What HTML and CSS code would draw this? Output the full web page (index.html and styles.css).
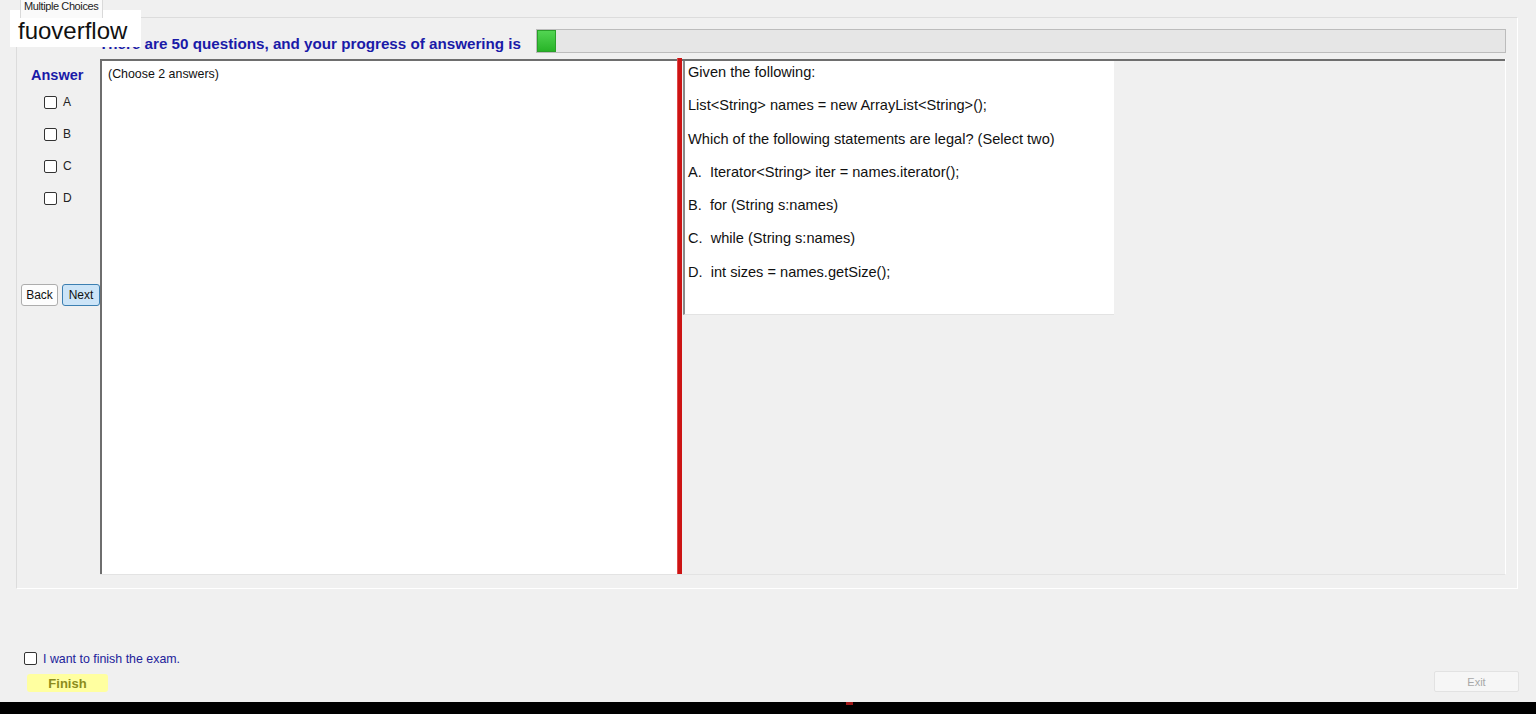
FILE: index.html
```html
<!DOCTYPE html>
<html lang="en">

<head>
  <meta charset="UTF-8" />
  <meta name="viewport" content="width=device-width, initial-scale=1.0" />
  <title>Multiple Choices</title>
  <link rel="stylesheet" href="styles.css">
</head>

<body>
  <div class="app">
    <!-- tab header -->
    <div class="tabs">
      <div class="tab">Multiple Choices</div>
    </div>

    <div class="tabpage">
      <!-- question count + progress -->
      <div class="head">
        <h1>There are 50 questions, and your progress of answering is</h1>
        <div class="progress">
          <div class="progress-fill"></div>
        </div>
      </div>

      <div class="main">
        <!-- answer options -->
        <div class="side">
          <div class="answer-title">Answer</div>
          <label class="opt"><input type="checkbox" /><span>A</span></label>
          <label class="opt"><input type="checkbox" /><span>B</span></label>
          <label class="opt"><input type="checkbox" /><span>C</span></label>
          <label class="opt"><input type="checkbox" /><span>D</span></label>
          <div class="nav">
            <button class="btn">Back</button>
            <button class="btn btn-next">Next</button>
          </div>
        </div>

        <div class="content">
          <div class="answerbox">(Choose 2 answers)</div>
          <div class="splitter"></div>
          <div class="question-area">
            <div class="question">
              <p>Given the following:</p>
              <p>List&lt;String&gt; names = new ArrayList&lt;String&gt;();</p>
              <p>Which of the following statements are legal? (Select two)</p>
              <p>A.&nbsp; Iterator&lt;String&gt; iter = names.iterator();</p>
              <p>B.&nbsp; for (String s:names)</p>
              <p>C.&nbsp; while (String s:names)</p>
              <p>D.&nbsp; int sizes = names.getSize();</p>
            </div>
          </div>
        </div>
      </div>
    </div>

    <!-- finish the exam -->
    <div class="footer">
      <div class="finish">
        <label class="finish-check"><input type="checkbox" /><span>I want to finish the exam.</span></label>
        <button class="btn-finish">Finish</button>
      </div>
      <button class="btn-exit" disabled>Exit</button>
    </div>

    <div class="taskbar"><span class="mark"></span></div>
  </div>

  <div class="watermark">fuoverflow</div>
</body>

</html>
```

FILE: styles.css
```css
* {
  margin: 0;
  padding: 0;
  box-sizing: border-box;
}

body {
  background: #f0f0f0;
  font-family: "Liberation Sans", Arial, sans-serif;
  color: #000;
  width: 1536px;
  height: 714px;
  overflow: hidden;
}

.app {
  height: 714px;
  display: flex;
  flex-direction: column;
}

/* tab strip */
.tabs {
  height: 17px;
  padding-left: 20px;
  display: flex;
}

.tab {
  width: 83px;
  height: 18px;
  background: #fafafa;
  border: 1px solid #d9d9d9;
  border-top: none;
  border-bottom: none;
  font-size: 11px;
  line-height: 12px;
  letter-spacing: -0.4px;
  padding-left: 3px;
  color: #222;
  white-space: nowrap;
  overflow: hidden;
  position: relative;
  z-index: 1;
}

.tabpage {
  margin-left: 16px;
  width: 1502px;
  height: 572px;
  border: 1px solid #dcdcdc;
  border-right-color: #fff;
  border-bottom-color: #fff;
  padding-top: 11px;
}

.head {
  display: flex;
  align-items: flex-end;
  padding-left: 82px;
  gap: 15px;
  height: 24px;
}

.head h1 {
  font-size: 15.2px;
  line-height: 17px;
  margin-bottom: 1px;
  font-weight: bold;
  color: #1a1aa8;
  white-space: nowrap;
}

.progress {
  width: 970px;
  height: 24px;
  border: 1px solid #bcbcbc;
  background: #e6e6e6;
}

.progress-fill {
  width: 19px;
  height: 100%;
  background: linear-gradient(#52d452, #28b428);
  border: 1px solid #2aa02a;
}

.main {
  display: flex;
  margin-top: 6px;
  height: 516px;
}

/* left column */
.side {
  width: 83px;
  display: flex;
  flex-direction: column;
}

.answer-title {
  margin-top: 8px;
  padding-left: 14px;
  font-size: 14.5px;
  line-height: 17px;
  font-weight: bold;
  color: #1a1aa8;
  margin-bottom: 2px;
}

.opt {
  height: 32px;
  display: flex;
  align-items: center;
  gap: 6px;
  padding-left: 27px;
  font-size: 12px;
  color: #222;
}

input[type="checkbox"] {
  appearance: none;
  width: 13px;
  height: 13px;
  margin: 0;
  border: 1px solid #333;
  border-radius: 2px;
  background: #fff;
}

.nav {
  margin-top: 70px;
  padding-left: 4px;
  display: flex;
  gap: 4px;
}

.btn {
  width: 37px;
  height: 22px;
  font: 12px "Liberation Sans", Arial, sans-serif;
  background: #fdfdfd;
  border: 1px solid #adadad;
  border-radius: 3px;
  color: #111;
}

.btn-next {
  width: 38px;
  background: #cce4f7;
  border: 1px solid #3c7fb1;
}

/* answer / question panes */
.content {
  width: 1406px;
  display: flex;
  border-right: 1px solid #fff;
  border-bottom: 1px solid #e3e3e3;
}

.answerbox {
  width: 577px;
  background: #fff;
  border-top: 2px solid #6e6e6e;
  border-left: 2px solid #6e6e6e;
  padding: 6px 6px;
  font-size: 12.4px;
  line-height: 14px;
  color: #111;
}

.splitter {
  width: 5px;
  margin-top: -1px;
  background: #cc1414;
  border-left: 1px solid #e04848;
}

.question-area {
  flex: 1;
  border-top: 2px solid #6e6e6e;
  padding-left: 1px;
}

.question {
  width: 431px;
  height: 254px;
  background: #fff;
  border-left: 2px solid #8a8a8a;
  border-bottom: 1px solid #e3e3e3;
  padding: 3px 0 0 3px;
  font-size: 14.6px;
  color: #111;
}

.question p {
  line-height: 17px;
  margin-bottom: 16.3px;
  white-space: nowrap;
}

/* bottom bar */
.footer {
  flex: 1;
  display: flex;
  align-items: flex-end;
  justify-content: space-between;
  padding: 0 17px 10px 24px;
}

.finish {
  display: flex;
  flex-direction: column;
}

.finish-check {
  display: flex;
  align-items: center;
  gap: 6px;
  font-size: 12.4px;
  color: #22229a;
  height: 13px;
}

.btn-finish {
  margin-top: 9px;
  margin-left: 3px;
  width: 81px;
  height: 18px;
  background: #ffffa0;
  border: none;
  border-radius: 3px;
  font: bold 13px "Liberation Sans", Arial, sans-serif;
  color: #8c8c1c;
}

.btn-exit {
  width: 85px;
  height: 21px;
  background: #f6f6f6;
  border: 1px solid #e2e2e2;
  border-radius: 2px;
  font: 11px "Liberation Sans", Arial, sans-serif;
  color: #a8a8a8;
}

.taskbar {
  height: 12px;
  background: #000;
}

.mark {
  display: block;
  width: 7px;
  height: 3px;
  margin-left: 846px;
  background: #a01818;
}

/* floating label over the header */
.watermark {
  position: absolute;
  left: 10px;
  top: 10px;
  width: 131px;
  height: 37px;
  background: #fff;
  font-size: 24px;
  line-height: 37px;
  padding: 2px 0 0 8px;
  color: #111;
}
```
